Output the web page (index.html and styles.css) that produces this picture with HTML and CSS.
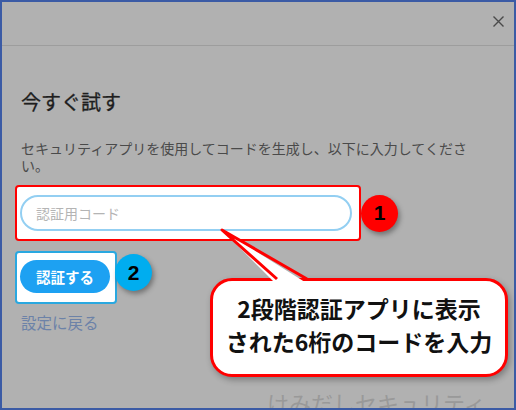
FILE: index.html
```html
<!DOCTYPE html>
<html>
  <head>
    <title>今すぐ試す</title>
    <link rel="stylesheet" href="styles.css">
  </head>
  <body>
    <div class="frame">
      <div class="kopf">
        <svg class="schliessen" width="11" height="11" viewBox="0 0 11 11">
          <path d="M0.5 0.5 L10.5 10.5 M10.5 0.5 L0.5 10.5" stroke="#4a4a4a" stroke-width="1.4" fill="none"/>
        </svg>
      </div>
      <div class="inhalt">
        <h1 class="titel">今すぐ試す</h1>
        <p class="text">セキュリティアプリを使用してコードを生成し、以下に入力してください。</p>
        <div class="zeile">
          <div class="rahmen-rot">
            <input class="code-feld" type="text" placeholder="認証用コード">
          </div>
          <div class="nummer rot">1</div>
        </div>
        <div class="zeile">
          <div class="rahmen-blau">
            <button class="knopf">認証する</button>
          </div>
          <div class="nummer blau">2</div>
        </div>
        <a class="zurueck">設定に戻る</a>
      </div>

      <div class="wasserzeichen">けみだしセキュリティ</div>
      <div class="blase">2段階認証アプリに表示<br>された6桁のコードを入力</div>
      <svg class="spitze" width="120" height="70" viewBox="0 0 120 70">
        <polygon points="10,10 64,64 96,64" fill="#ffffff"/>
        <polyline points="65,59 10,10 95,59" fill="none" stroke="#ff0000" stroke-width="3" stroke-linejoin="round"/>
      </svg>
    </div>
  </body>
</html>
```

FILE: styles.css
```css
body {
  margin: 0;
  font-family: "Noto Sans CJK JP", "Noto Sans", sans-serif;
}

.frame {
  position: relative;
  box-sizing: border-box;
  width: 516px;
  height: 410px;
  border: 2px solid #3b5ba5;
  background-color: #b1b1b1;
  overflow: hidden;
}

.kopf {
  display: flex;
  justify-content: flex-end;
  align-items: flex-start;
  height: 44px;
  box-sizing: border-box;
  padding: 14px 10px 0 0;
  border-bottom: 1px solid #9d9d9d;
}

.inhalt {
  padding: 0 0 0 13px;
}

.titel {
  margin: 44px 0 0 6px;
  font-size: 20px;
  line-height: 24px;
  font-weight: normal;
  color: #1e1e1e;
  -webkit-text-stroke: 0.3px #1e1e1e;
}

.text {
  margin: 26px 0 0 6px;
  width: 470px;
  font-size: 14px;
  line-height: 17px;
  color: #4a4a4a;
}

.zeile {
  display: flex;
  align-items: center;
}

.rahmen-rot {
  margin-top: 11px;
  width: 346px;
  height: 56px;
  box-sizing: border-box;
  border: 2px solid #ff0000;
  border-radius: 4px;
  background-color: #ffffff;
  padding: 8px 8px 8px 3px;
}

.code-feld {
  box-sizing: border-box;
  width: 332px;
  height: 36px;
  border: 2px solid #93cff2;
  border-radius: 18px;
  padding: 0 0 0 14px;
  font-family: inherit;
  font-size: 14px;
  outline: none;
}

.code-feld::placeholder {
  color: #b4b4b4;
}

.nummer {
  width: 37px;
  height: 37px;
  border-radius: 50%;
  display: flex;
  align-items: center;
  justify-content: center;
  font-family: "Liberation Sans", sans-serif;
  font-weight: bold;
  font-size: 21px;
  color: #000000;
  box-shadow: 2px 3px 5px rgba(0, 0, 0, 0.35);
}

.rot {
  background-color: #ff0000;
  margin: 11px 0 0 0;
}

.blau {
  background-color: #00adef;
  margin: 0 0 0 -2px;
}

.rahmen-blau {
  margin-top: 10px;
  width: 102px;
  height: 53px;
  box-sizing: border-box;
  border: 2px solid #29a8e0;
  border-radius: 4px;
  background-color: #ffffff;
  padding: 7px 5px 0 3px;
}

.knopf {
  width: 90px;
  height: 33px;
  border: none;
  border-radius: 17px;
  background-color: #1da1f2;
  color: #ffffff;
  font-family: inherit;
  font-weight: bold;
  font-size: 14.5px;
  padding: 0;
}

.zurueck {
  display: block;
  margin: 8px 0 0 6px;
  font-size: 15.5px;
  line-height: 20px;
  color: #6c82a8;
}

.blase {
  position: absolute;
  left: 208px;
  top: 276px;
  width: 298px;
  height: 99px;
  box-sizing: border-box;
  border: 3px solid #ff0000;
  border-radius: 22px;
  background-color: #ffffff;
  box-shadow: 2px 3px 6px rgba(0, 0, 0, 0.3);
  padding-top: 11px;
  text-align: center;
  font-size: 23px;
  line-height: 33px;
  font-weight: bold;
  color: #111111;
}

.spitze {
  position: absolute;
  left: 210px;
  top: 218px;
}

.wasserzeichen {
  position: absolute;
  left: 265px;
  top: 384px;
  font-size: 22px;
  color: #999999;
}
```
